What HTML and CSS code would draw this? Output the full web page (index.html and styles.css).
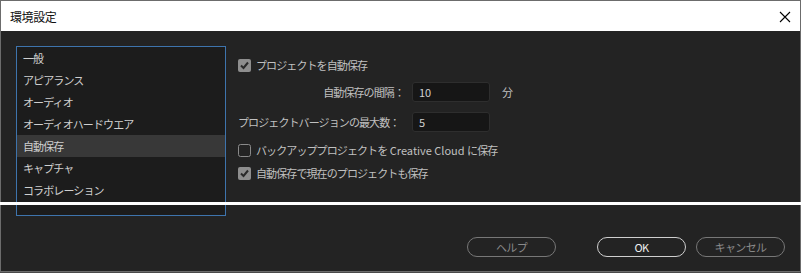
FILE: index.html
```html
<!DOCTYPE html>
<html lang="ja">
<head>
    <meta charset="UTF-8">
    <title>環境設定</title>
    <link rel="stylesheet" href="styles.css">
</head>
<body>
    <div class="dialog">
        <div class="titlebar">
            <span class="title">環境設定</span>
            <svg class="close" width="12" height="12" viewBox="0 0 12 12">
                <path d="M1 1 L11 11 M11 1 L1 11" stroke="#000" stroke-width="1.1" fill="none"/>
            </svg>
        </div>
        <div class="content">
            <div class="main">
                <ul class="sidebar">
                    <li>一般</li>
                    <li>アピアランス</li>
                    <li>オーディオ</li>
                    <li>オーディオハードウエア</li>
                    <li class="selected">自動保存</li>
                    <li>キャプチャ</li>
                    <li>コラボレーション</li>
                </ul>
                <div class="settings">
                    <label class="check-row row-1">
                        <svg class="box" width="13" height="13" viewBox="0 0 13 13">
                            <rect x="0" y="0" width="13" height="13" rx="2" fill="#8e8e8e"/>
                            <path d="M3 6.5 L5.5 9 L10 3.5" stroke="#2a2a2a" stroke-width="2" fill="none"/>
                        </svg>
                        <span>プロジェクトを自動保存</span>
                    </label>
                    <div class="field-row row-2">
                        <span class="field-label right">自動保存の間隔：</span>
                        <div class="input">10</div>
                        <span class="unit">分</span>
                    </div>
                    <div class="field-row row-3">
                        <span class="field-label">プロジェクトバージョンの最大数：</span>
                        <div class="input">5</div>
                    </div>
                    <label class="check-row row-4">
                        <svg class="box" width="13" height="13" viewBox="0 0 13 13">
                            <rect x="0.5" y="0.5" width="12" height="12" rx="2" fill="none" stroke="#8a8a8a"/>
                        </svg>
                        <span>バックアッププロジェクトを<span class="latin"> Creative Cloud </span>に保存</span>
                    </label>
                    <label class="check-row row-5">
                        <svg class="box" width="13" height="13" viewBox="0 0 13 13">
                            <rect x="0" y="0" width="13" height="13" rx="2" fill="#8e8e8e"/>
                            <path d="M3 6.5 L5.5 9 L10 3.5" stroke="#2a2a2a" stroke-width="2" fill="none"/>
                        </svg>
                        <span>自動保存で現在のプロジェクトも保存</span>
                    </label>
                </div>
            </div>
            <div class="footer">
                <button class="btn disabled help">ヘルプ</button>
                <button class="btn primary">OK</button>
                <button class="btn disabled">キャンセル</button>
            </div>
        </div>
        <div class="stripe"></div>
    </div>
</body>
</html>
```

FILE: styles.css
```css
body {
    margin: 0;
    background: #4a4a4a;
    font-family: "Noto Sans CJK JP", "Noto Sans", sans-serif;
}

.dialog {
    position: relative;
    width: 801px;
    height: 272px;
    box-sizing: border-box;
    border: 1px solid #6c6c6c;
    background: #232323;
    display: flex;
    flex-direction: column;
}

.titlebar {
    height: 30px;
    background: #ffffff;
    display: flex;
    align-items: center;
    justify-content: space-between;
    padding: 0 9px 0 9px;
}

.title {
    font-size: 12px;
    letter-spacing: -0.4px;
    color: #111;
}

.close {
    margin-top: 1px;
}

.content {
    flex: 1;
    padding: 15px 15px 0 15px;
}

.main {
    display: flex;
    gap: 12px;
}

/* left category list */
.sidebar {
    list-style: none;
    margin: 0;
    padding: 0;
    width: 210px;
    height: 170px;
    box-sizing: border-box;
    border: 1px solid #3e74ad;
    background: #1c1c1c;
}

.sidebar li {
    height: 22px;
    line-height: 22px;
    padding-left: 6px;
    font-size: 11px;
    letter-spacing: -0.9px;
    color: #cfcfcf;
}

.sidebar li.selected {
    background: #383838;
}

/* right settings */
.settings {
    display: flex;
    flex-direction: column;
    padding-top: 9px;
    font-size: 11px;
    letter-spacing: -0.9px;
    color: #c0c0c0;
}

.check-row {
    display: flex;
    align-items: center;
    gap: 5px;
    height: 20px;
}

.check-row .box {
    flex: none;
}

.latin {
    letter-spacing: 0;
    white-space: pre;
}

.field-row {
    display: flex;
    align-items: center;
    height: 20px;
}

.field-label {
    width: 166px;
    margin-right: 8px;
    white-space: nowrap;
}

.field-label.right {
    text-align: right;
}

.input {
    width: 78px;
    height: 20px;
    box-sizing: border-box;
    background: #161616;
    border: 1px solid #2e2e2e;
    border-radius: 3px;
    padding-left: 6px;
    line-height: 18px;
    color: #d0d0d0;
    letter-spacing: 0;
}

.unit {
    margin-left: 12px;
}

.row-2 { margin-top: 7px; }
.row-3 { margin-top: 10px; }
.row-4 { margin-top: 8px; }
.row-5 { margin-top: 3px; }

/* bottom buttons */
.footer {
    display: flex;
    justify-content: flex-end;
    gap: 10px;
    margin-top: 21px;
}

.btn {
    width: 89px;
    height: 20px;
    border-radius: 10px;
    background: transparent;
    font-family: inherit;
    font-size: 11px;
    letter-spacing: -0.6px;
    padding: 0;
    line-height: 18px;
}

.btn.disabled {
    border: 1px solid #777777;
    color: #8a8a8a;
}

.btn.primary {
    border: 1px solid #cfcfcf;
    color: #f0f0f0;
}

.btn.help {
    margin-right: 31px;
}

/* white capture line across the window */
.stripe {
    position: absolute;
    left: -1px;
    right: -1px;
    top: 201px;
    height: 3px;
    background: #ffffff;
}
```
